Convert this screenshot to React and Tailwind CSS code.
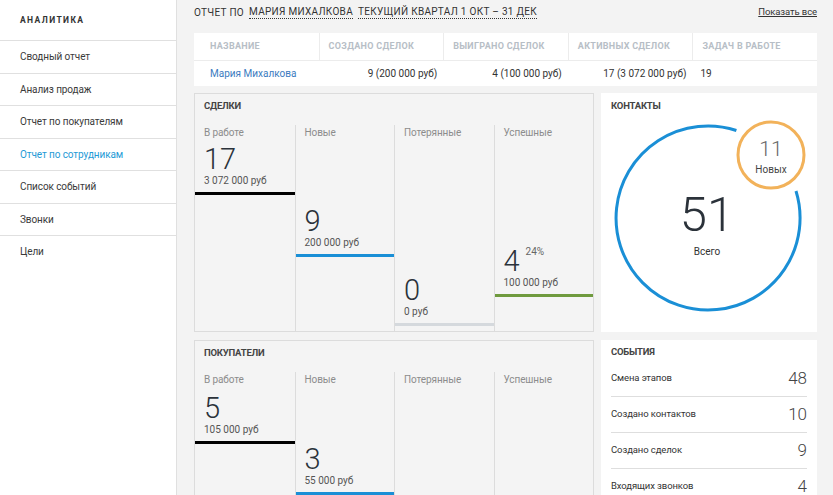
const menu = [
  "Сводный отчет",
  "Анализ продаж",
  "Отчет по покупателям",
  "Отчет по сотрудникам",
  "Список событий",
  "Звонки",
  "Цели",
];

const deals = [
  { label: "В работе", value: "17", money: "3 072 000 руб", offset: "mt-[3px]", bar: "bg-black" },
  { label: "Новые", value: "9", money: "200 000 руб", offset: "mt-[65px]", bar: "bg-[#1a8fd6]" },
  { label: "Потерянные", value: "0", money: "0 руб", offset: "mt-[134px]", bar: "bg-[#d5d9dd]" },
  { label: "Успешные", value: "4", pct: "24%", money: "100 000 руб", offset: "mt-[105px]", bar: "bg-[#6f9a3e]" },
];

const buyers = [
  { label: "В работе", value: "5", money: "105 000 руб", offset: "mt-[5px]", bar: "bg-black" },
  { label: "Новые", value: "3", money: "55 000 руб", offset: "mt-[56px]", bar: "bg-[#1a8fd6]" },
  { label: "Потерянные" },
  { label: "Успешные" },
];

const events = [
  ["Смена этапов", "48"],
  ["Создано контактов", "10"],
  ["Создано сделок", "9"],
  ["Входящих звонков", "4"],
];

const StatColumn = ({ col, first }) => (
  <div className={`flex flex-col ${first ? "" : "border-l border-[#dcdcdc]"}`}>
    <div className="px-[9px] text-[10px] leading-[16px] tracking-[-0.1px] text-[#8c8c8c]">{col.label}</div>
    {col.value && (
      <div className={col.offset}>
        <div className="px-[9px] text-[29px] leading-[30px] font-light text-[#2b323a]">
          {col.value}
          {col.pct && (
            <span className="ml-[6px] inline-block align-top text-[10px] leading-[12px] font-normal text-[#666]">
              {col.pct}
            </span>
          )}
        </div>
        <div className="mt-[1px] px-[9px] text-[10px] leading-[12px] text-[#555]">{col.money}</div>
        <div className={`mt-[5px] h-[3px] ${col.bar}`} />
      </div>
    )}
  </div>
);

const StatPanel = ({ title, cols }) => (
  <div className="flex h-[239px] w-[400px] flex-col border border-[#dcdcdc] bg-[#f4f4f4]">
    <div className="h-[31px] shrink-0 pl-[9px] pt-[6px] text-[9.5px] leading-[12px] font-bold tracking-[-0.2px] text-[#444]">
      {title}
    </div>
    <div className="grid flex-1 grid-cols-4">
      {cols.map((c, i) => (
        <StatColumn key={i} col={c} first={i === 0} />
      ))}
    </div>
  </div>
);

export default function App() {
  return (
    <div
      className="flex min-h-screen bg-[#f3f3f3] text-[#333]"
      style={{ fontFamily: "Roboto, 'Liberation Sans', sans-serif" }}
    >
      <aside className="w-[177px] shrink-0 border-r border-[#e0e0e0] bg-white">
        <div className="flex h-[40px] items-center pl-[20px] text-[8.5px] font-bold tracking-[1.4px] text-[#333]">
          АНАЛИТИКА
        </div>
        {menu.map((m, i) => (
          <div
            key={m}
            className={`flex h-[32.5px] items-center border-t border-[#e0e0e0] pl-[20px] text-[10px] tracking-[-0.1px] ${
              i === 3 ? "text-[#1e9ad6]" : "text-[#3a3a3a]"
            }`}
          >
            {m}
          </div>
        ))}
      </aside>

      <main className="flex-1 pl-[17px] pr-[16px]">
        <div className="flex h-[33px] items-center justify-between pb-[9px]">
          <div className="flex items-center gap-[5px] text-[10px] tracking-[0.3px] text-[#333]">
            <span>ОТЧЕТ ПО</span>
            <span className="border-b border-dotted border-[#333] leading-[13px]">МАРИЯ МИХАЛКОВА</span>
            <span className="border-b border-dotted border-[#333] leading-[13px]">
              ТЕКУЩИЙ КВАРТАЛ 1 ОКТ – 31 ДЕК
            </span>
          </div>
          <a className="cursor-pointer text-[9.5px] tracking-[-0.1px] text-[#333] underline">Показать все</a>
        </div>

        <div className="bg-white">
          <div className="grid h-[28px] grid-cols-5 border-b border-[#ececec] text-[9px] font-bold tracking-[0.3px] text-[#b7bec6]">
            <div className="flex items-center pl-[16px]">НАЗВАНИЕ</div>
            <div className="flex items-center border-l border-[#ececec] pl-[9px]">СОЗДАНО СДЕЛОК</div>
            <div className="flex items-center border-l border-[#ececec] pl-[9px]">ВЫИГРАНО СДЕЛОК</div>
            <div className="flex items-center border-l border-[#ececec] pl-[9px]">АКТИВНЫХ СДЕЛОК</div>
            <div className="flex items-center border-l border-[#ececec] pl-[9px]">ЗАДАЧ В РАБОТЕ</div>
          </div>
          <div className="grid h-[25px] grid-cols-5 text-[10px] text-[#333]">
            <div className="flex items-center pl-[16px] text-[#3b7bc0]">Мария Михалкова</div>
            <div className="flex items-center justify-end pr-[6px]">9 (200 000 руб)</div>
            <div className="flex items-center justify-end pr-[6px]">4 (100 000 руб)</div>
            <div className="flex items-center justify-end pr-[6px]">17 (3 072 000 руб)</div>
            <div className="flex items-center pl-[8px]">19</div>
          </div>
        </div>

        <div className="mt-[7px] flex gap-[7px]">
          <StatPanel title="СДЕЛКИ" cols={deals} />

          <div className="relative h-[239px] w-[216px] bg-white">
            <div className="pl-[10px] pt-[7px] text-[9.5px] leading-[12px] font-bold tracking-[-0.2px] text-[#444]">
              КОНТАКТЫ
            </div>
            <svg className="absolute left-0 top-0" width="216" height="239" viewBox="0 0 216 239">
              <path
                d="M 195 98 A 92 92 0 1 1 135.4 37.5"
                fill="none"
                stroke="#1a8fd6"
                strokeWidth="3"
              />
              <circle cx="170" cy="62" r="33" fill="white" stroke="#f2b25a" strokeWidth="3" />
            </svg>
            <div className="absolute left-[56px] top-[97px] w-[100px] text-center text-[49px] leading-[49px] font-light text-[#2b323a]">
              51
            </div>
            <div className="absolute left-[56px] top-[153px] w-[100px] text-center text-[10px] leading-[12px] text-[#333]">
              Всего
            </div>
            <div className="absolute left-[120px] top-[46px] w-[100px] text-center text-[21px] leading-[21px] font-light text-[#666]">
              11
            </div>
            <div className="absolute left-[120px] top-[71px] w-[100px] text-center text-[10px] leading-[12px] text-[#444]">
              Новых
            </div>
          </div>
        </div>

        <div className="mt-[8px] flex gap-[7px]">
          <StatPanel title="ПОКУПАТЕЛИ" cols={buyers} />

          <div className="h-[239px] w-[216px] bg-white px-[10px]">
            <div className="h-[21px] pt-[6px] text-[9.5px] leading-[12px] font-bold tracking-[-0.2px] text-[#444]">
              СОБЫТИЯ
            </div>
            {events.map(([l, v]) => (
              <div key={l} className="flex h-[36px] items-center justify-between border-b border-[#dedede]">
                <span className="text-[9.5px] tracking-[-0.1px] text-[#333]">{l}</span>
                <span className="text-[17px] font-light text-[#444]">{v}</span>
              </div>
            ))}
          </div>
        </div>
      </main>
    </div>
  );
}
